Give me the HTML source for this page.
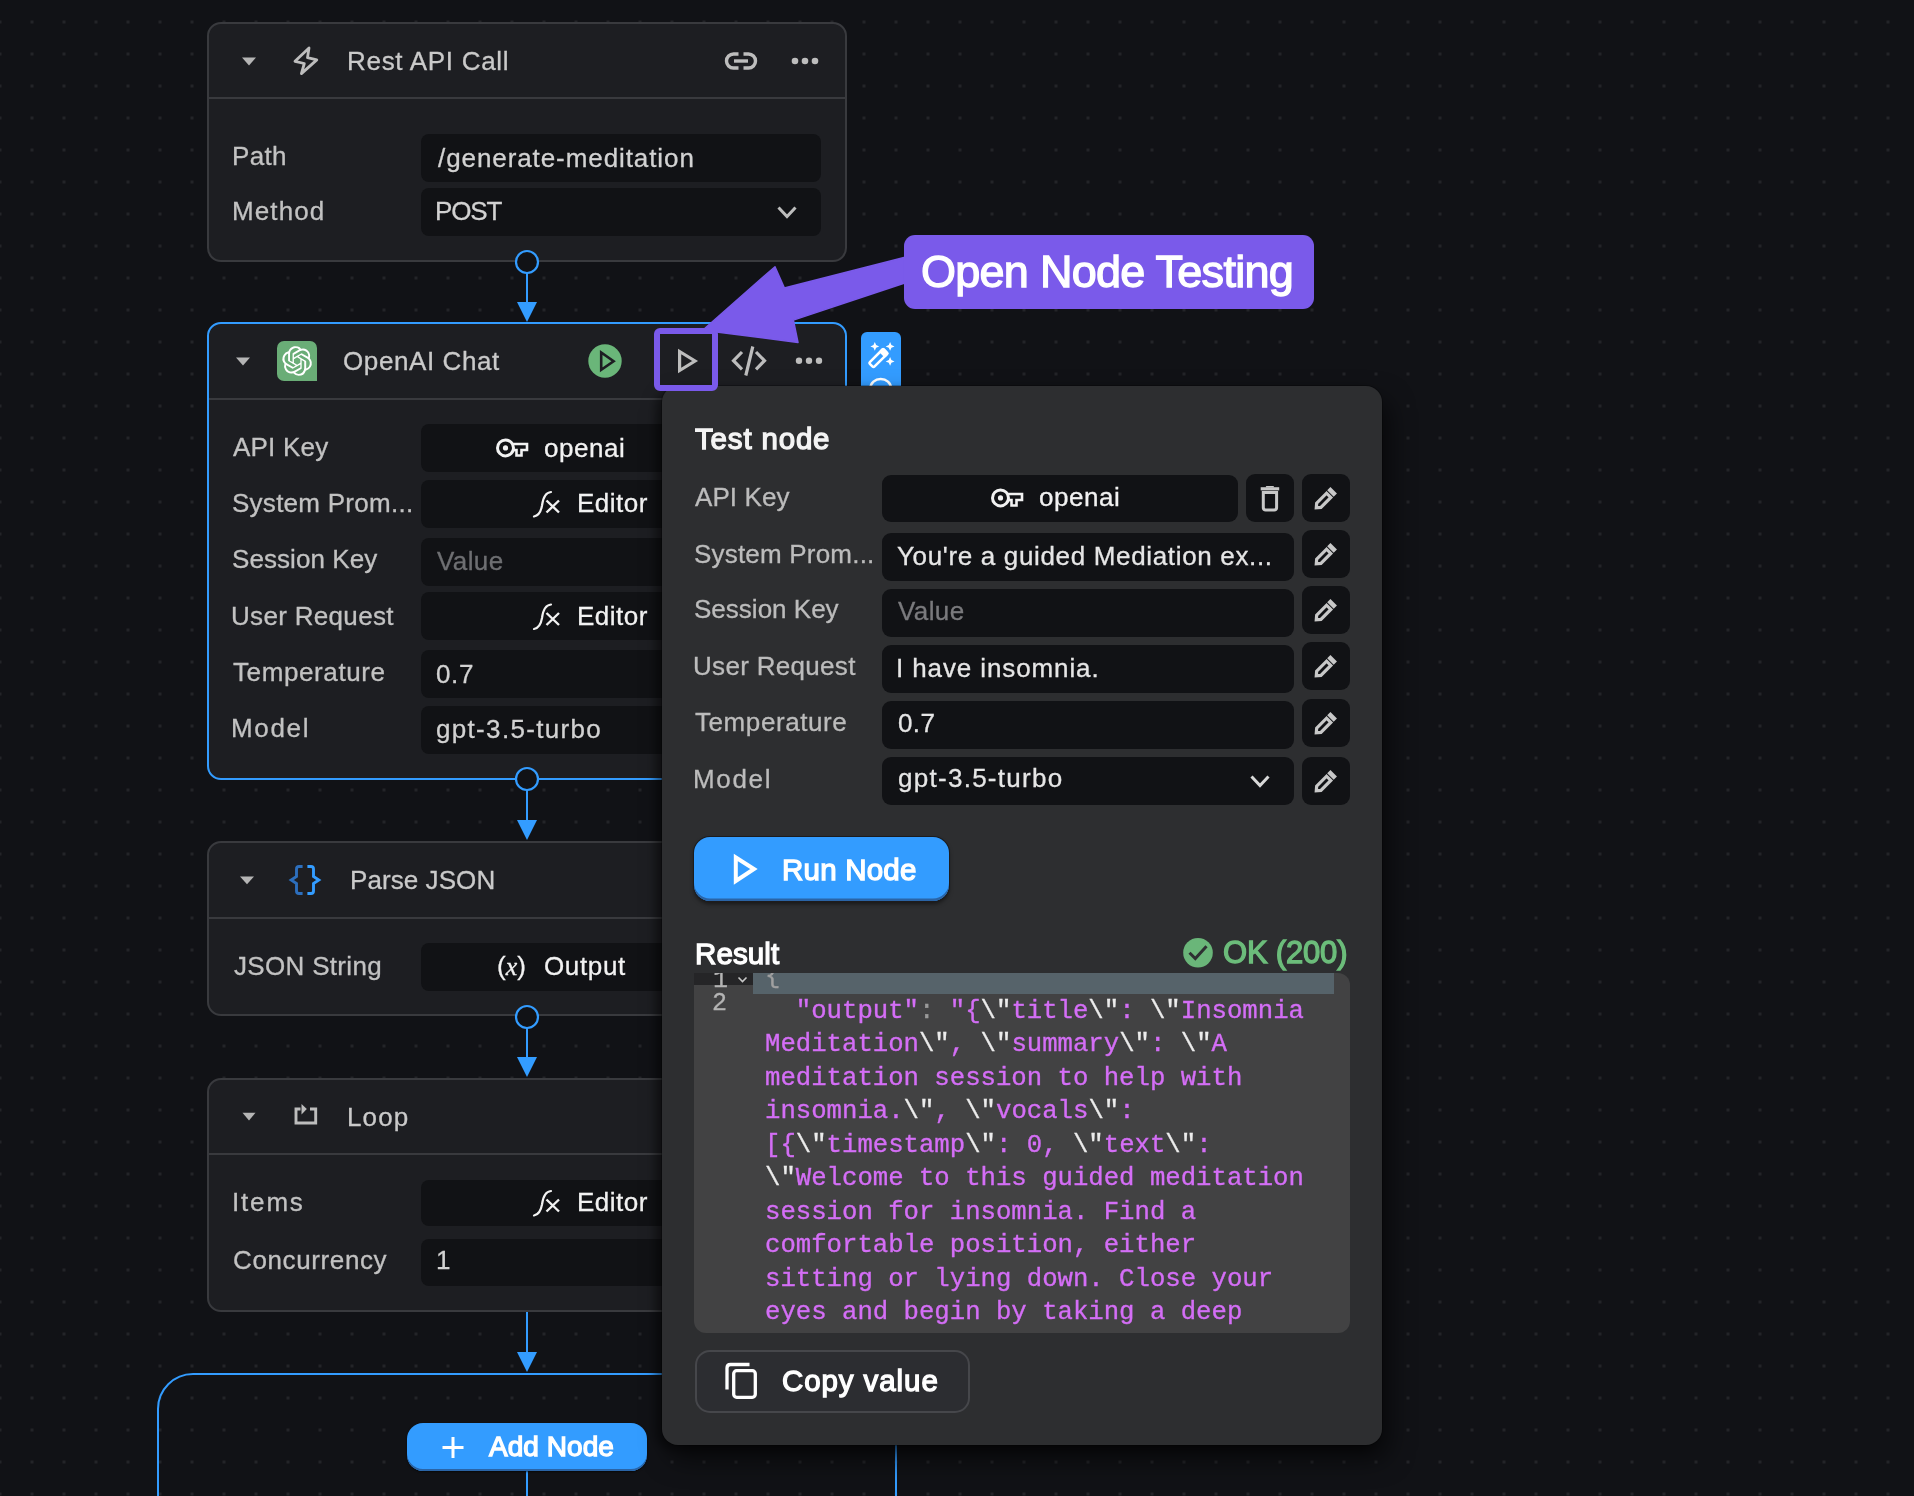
<!DOCTYPE html><html><head><meta charset="utf-8"><style>
html,body{margin:0;padding:0;}
body{width:1914px;height:1496px;overflow:hidden;position:relative;background-color:#111216;
font-family:"Liberation Sans",sans-serif;}
.t{position:absolute;white-space:pre;will-change:transform;-webkit-text-stroke:0.3px currentColor;}
.b{position:absolute;box-sizing:border-box;}
.s{position:absolute;left:0;top:0;overflow:visible;}
</style></head><body>
<svg class="s" width="1914" height="1496"><defs><pattern id="dp" x="-1.5" y="20.5" width="32" height="32" patternUnits="userSpaceOnUse"><rect x="0" y="0" width="3" height="3" fill="#232428"/></pattern></defs><rect width="1914" height="1496" fill="url(#dp)"/></svg>
<div class="b" style="left:207px;top:22px;width:640px;height:240px;background:#1d1e22;border:2px solid #393a3e;border-radius:14px;"></div>
<div class="b" style="left:209px;top:97px;width:636px;height:2px;background:#393a3e;"></div>
<div class="t" style="left:347.30px;top:44.5px;font-size:26px;line-height:32px;color:#cacaca;font-weight:400;letter-spacing:0.700px;font-family:'Liberation Sans',monospace;">Rest API Call</div>
<div class="b" style="left:421px;top:134px;width:400px;height:48px;background:#111215;border-radius:8px;"></div>
<div class="b" style="left:421px;top:188px;width:400px;height:48px;background:#111215;border-radius:8px;"></div>
<div class="t" style="left:232.30px;top:139.5px;font-size:26px;line-height:32px;color:#c2c2c2;font-weight:400;letter-spacing:0.333px;font-family:'Liberation Sans',monospace;">Path</div>
<div class="t" style="left:437.50px;top:142.0px;font-size:26px;line-height:32px;color:#d2d2d2;font-weight:400;letter-spacing:0.916px;font-family:'Liberation Sans',monospace;">/generate-meditation</div>
<div class="t" style="left:232.30px;top:195.0px;font-size:26px;line-height:32px;color:#c2c2c2;font-weight:400;letter-spacing:1.120px;font-family:'Liberation Sans',monospace;">Method</div>
<div class="t" style="left:435.20px;top:194.5px;font-size:26px;line-height:32px;color:#d2d2d2;font-weight:400;letter-spacing:-1.167px;font-family:'Liberation Sans',monospace;">POST</div>
<div class="b" style="left:207px;top:322px;width:640px;height:458px;background:#1d1e22;border:2px solid #339cff;border-radius:14px;"></div>
<div class="b" style="left:209px;top:397.5px;width:636px;height:2.0px;background:#393a3e;"></div>
<div class="b" style="left:277px;top:341px;width:40px;height:40px;background:#6aad77;border-radius:7px 7px 0 7px;"></div>
<div class="t" style="left:342.50px;top:345.0px;font-size:26px;line-height:32px;color:#cacaca;font-weight:400;letter-spacing:0.600px;font-family:'Liberation Sans',monospace;">OpenAI Chat</div>
<div class="b" style="left:421px;top:424px;width:339px;height:48px;background:#111215;border-radius:8px;"></div>
<div class="t" style="left:233.40px;top:431.4px;font-size:26px;line-height:32px;color:#c2c2c2;font-weight:400;letter-spacing:0.200px;font-family:'Liberation Sans',monospace;">API Key</div>
<div class="b" style="left:421px;top:480px;width:339px;height:48px;background:#111215;border-radius:8px;"></div>
<div class="t" style="left:232.40px;top:487.2px;font-size:26px;line-height:32px;color:#c2c2c2;font-weight:400;letter-spacing:0.262px;font-family:'Liberation Sans',monospace;">System Prom...</div>
<div class="b" style="left:421px;top:538px;width:339px;height:48px;background:#111215;border-radius:8px;"></div>
<div class="t" style="left:232.40px;top:543.1px;font-size:26px;line-height:32px;color:#c2c2c2;font-weight:400;letter-spacing:0.070px;font-family:'Liberation Sans',monospace;">Session Key</div>
<div class="b" style="left:421px;top:592px;width:339px;height:48px;background:#111215;border-radius:8px;"></div>
<div class="t" style="left:231.40px;top:599.5px;font-size:26px;line-height:32px;color:#c2c2c2;font-weight:400;letter-spacing:0.318px;font-family:'Liberation Sans',monospace;">User Request</div>
<div class="b" style="left:421px;top:650px;width:339px;height:48px;background:#111215;border-radius:8px;"></div>
<div class="t" style="left:233.40px;top:655.7px;font-size:26px;line-height:32px;color:#c2c2c2;font-weight:400;letter-spacing:0.610px;font-family:'Liberation Sans',monospace;">Temperature</div>
<div class="b" style="left:421px;top:706px;width:339px;height:48px;background:#111215;border-radius:8px;"></div>
<div class="t" style="left:231.40px;top:712.0px;font-size:26px;line-height:32px;color:#c2c2c2;font-weight:400;letter-spacing:1.650px;font-family:'Liberation Sans',monospace;">Model</div>
<div class="t" style="left:544.00px;top:432.0px;font-size:26px;line-height:32px;color:#f2f2f2;font-weight:400;letter-spacing:0.560px;font-family:'Liberation Sans',monospace;">openai</div>
<div class="t" style="left:576.80px;top:486.8px;font-size:26px;line-height:32px;color:#f2f2f2;font-weight:400;letter-spacing:0.480px;font-family:'Liberation Sans',monospace;">Editor</div>
<div class="t" style="left:437.40px;top:545.0px;font-size:26px;line-height:32px;color:#6e6f72;font-weight:400;letter-spacing:0.400px;font-family:'Liberation Sans',monospace;">Value</div>
<div class="t" style="left:576.80px;top:599.5px;font-size:26px;line-height:32px;color:#f2f2f2;font-weight:400;letter-spacing:0.480px;font-family:'Liberation Sans',monospace;">Editor</div>
<div class="t" style="left:436.40px;top:658.0px;font-size:26px;line-height:32px;color:#d2d2d2;font-weight:400;letter-spacing:0.650px;font-family:'Liberation Sans',monospace;">0.7</div>
<div class="t" style="left:436.40px;top:713.0px;font-size:26px;line-height:32px;color:#d2d2d2;font-weight:400;letter-spacing:1.325px;font-family:'Liberation Sans',monospace;">gpt-3.5-turbo</div>
<div class="b" style="left:207px;top:841px;width:640px;height:175px;background:#1d1e22;border:2px solid #393a3e;border-radius:14px;"></div>
<div class="b" style="left:209px;top:917px;width:636px;height:2px;background:#393a3e;"></div>
<div class="t" style="left:350.20px;top:864.0px;font-size:26px;line-height:32px;color:#cacaca;font-weight:400;letter-spacing:0.078px;font-family:'Liberation Sans',monospace;">Parse JSON</div>
<div class="b" style="left:421px;top:943px;width:339px;height:48px;background:#111215;border-radius:8px;"></div>
<div class="t" style="left:233.80px;top:950.0px;font-size:26px;line-height:32px;color:#c2c2c2;font-weight:400;letter-spacing:0.320px;font-family:'Liberation Sans',monospace;">JSON String</div>
<div class="t" style="left:497.00px;top:950.0px;font-size:26px;line-height:32px;color:#f2f2f2;font-weight:400;letter-spacing:0.000px;font-family:'Liberation Sans',monospace;">(<i style='font-family:"Liberation Serif"'>x</i>)</div>
<div class="t" style="left:543.80px;top:950.0px;font-size:26px;line-height:32px;color:#f2f2f2;font-weight:400;letter-spacing:0.640px;font-family:'Liberation Sans',monospace;">Output</div>
<div class="b" style="left:207px;top:1078px;width:640px;height:234px;background:#1d1e22;border:2px solid #393a3e;border-radius:14px;"></div>
<div class="b" style="left:209px;top:1153px;width:636px;height:2px;background:#393a3e;"></div>
<div class="t" style="left:347.30px;top:1100.5px;font-size:26px;line-height:32px;color:#cacaca;font-weight:400;letter-spacing:1.133px;font-family:'Liberation Sans',monospace;">Loop</div>
<div class="b" style="left:421px;top:1180px;width:339px;height:46px;background:#111215;border-radius:8px;"></div>
<div class="b" style="left:421px;top:1238.5px;width:339px;height:47.0px;background:#111215;border-radius:8px;"></div>
<div class="t" style="left:232.00px;top:1186.0px;font-size:26px;line-height:32px;color:#c2c2c2;font-weight:400;letter-spacing:1.825px;font-family:'Liberation Sans',monospace;">Items</div>
<div class="t" style="left:576.60px;top:1186.0px;font-size:26px;line-height:32px;color:#f2f2f2;font-weight:400;letter-spacing:0.480px;font-family:'Liberation Sans',monospace;">Editor</div>
<div class="t" style="left:233.00px;top:1244.4px;font-size:26px;line-height:32px;color:#c2c2c2;font-weight:400;letter-spacing:0.620px;font-family:'Liberation Sans',monospace;">Concurrency</div>
<div class="t" style="left:435.60px;top:1244.0px;font-size:26px;line-height:32px;color:#d2d2d2;font-weight:400;letter-spacing:0.000px;font-family:'Liberation Sans',monospace;">1</div>
<div class="b" style="left:157px;top:1373px;width:740px;height:227px;border:2px solid #339cff;border-radius:36px;"></div>
<svg class="s" width="1914" height="1496" viewBox="0 0 1914 1496" style=""><polygon points="242,57.6 256,57.6 249.0,65.4" fill="#b5b5b5"/><polygon points="309,48 295,61.3 304.3,63.5 301.4,73.6 316.8,59.9 307.5,57.6" stroke="#bdbdbd" stroke-width="2.8" fill="none" stroke-linejoin="round"/><path d="M738.5 54 H733.5 A7 7 0 0 0 733.5 68 H738.5 M743.5 54 H748.5 A7 7 0 0 1 748.5 68 H743.5" stroke="#bdbdbd" stroke-width="3.4" fill="none"/><rect x="734" y="59.3" width="14" height="3.4" fill="#bdbdbd"/><circle cx="795" cy="61" r="3.3" fill="#bdbdbd"/><circle cx="805" cy="61" r="3.3" fill="#bdbdbd"/><circle cx="815" cy="61" r="3.3" fill="#bdbdbd"/><path d="M778.5 207.5 L787.0 216.5 L795.5 207.5" stroke="#bdbdbd" stroke-width="3" fill="none"/><circle cx="527" cy="262" r="11" stroke="#339cff" stroke-width="2.2" fill="#111216"/><rect x="526" y="273" width="2" height="30" fill="#339cff"/><polygon points="517,302 537,302 527,322" fill="#339cff"/><polygon points="236,357.6 250,357.6 243.0,365.4" fill="#b5b5b5"/><circle cx="605" cy="361" r="16.7" fill="#6ab679"/><path d="M601.2 352.5 V369.8 L613.6 361.2 Z" stroke="#1d1e22" stroke-width="2.6" fill="none" stroke-linejoin="miter"/><path d="M679.6 351.5 V370.5 L695 361 Z" stroke="#bdbdbd" stroke-width="3.2" fill="none" stroke-linejoin="miter"/><path d="M742 352 L733.5 360.7 L742 369.4 M756 352 L764.5 360.7 L756 369.4 M752.8 346.5 L745.8 375.5" stroke="#bdbdbd" stroke-width="3.2" fill="none"/><circle cx="799" cy="360.8" r="3.2" fill="#bdbdbd"/><circle cx="809" cy="360.8" r="3.2" fill="#bdbdbd"/><circle cx="819" cy="360.8" r="3.2" fill="#bdbdbd"/><path transform="translate(282.3 346.2) scale(1.235)" d="M22.2819 9.8211a5.9847 5.9847 0 0 0-.5157-4.9108 6.0462 6.0462 0 0 0-6.5098-2.9A6.0651 6.0651 0 0 0 4.9807 4.1818a5.9847 5.9847 0 0 0-3.9977 2.9 6.0462 6.0462 0 0 0 .7427 7.0966 5.98 5.98 0 0 0 .511 4.9107 6.051 6.051 0 0 0 6.5146 2.9001A5.9847 5.9847 0 0 0 13.2599 24a6.0557 6.0557 0 0 0 5.7718-4.2058 5.9894 5.9894 0 0 0 3.9977-2.9001 6.0557 6.0557 0 0 0-.7475-7.0729zm-9.022 12.6081a4.4755 4.4755 0 0 1-2.8764-1.0408l.1419-.0804 4.7783-2.7582a.7948.7948 0 0 0 .3927-.6813v-6.7369l2.02 1.1686a.071.071 0 0 1 .038.052v5.5826a4.504 4.504 0 0 1-4.4945 4.4944zm-9.6607-4.1254a4.4708 4.4708 0 0 1-.5346-3.0137l.142.0852 4.783 2.7582a.7712.7712 0 0 0 .7806 0l5.8428-3.3685v2.3324a.0804.0804 0 0 1-.0332.0615L9.74 19.9502a4.4992 4.4992 0 0 1-6.1408-1.6464zM2.3408 7.8956a4.485 4.485 0 0 1 2.3655-1.9728V11.6a.7664.7664 0 0 0 .3879.6765l5.8144 3.3543-2.0201 1.1685a.0757.0757 0 0 1-.071 0l-4.8303-2.7865A4.504 4.504 0 0 1 2.3408 7.872zm16.5963 3.8558L13.1038 8.364 15.1192 7.2a.0757.0757 0 0 1 .071 0l4.8303 2.7913a4.4944 4.4944 0 0 1-.6765 8.1042v-5.6772a.79.79 0 0 0-.407-.667zm2.0107-3.0231l-.142-.0852-4.7735-2.7818a.7759.7759 0 0 0-.7854 0L9.409 9.2297V6.8974a.0662.0662 0 0 1 .0284-.0615l4.8303-2.7866a4.4992 4.4992 0 0 1 6.6802 4.66zM8.3065 12.863l-2.02-1.1638a.0804.0804 0 0 1-.038-.0567V6.0742a4.4992 4.4992 0 0 1 7.3757-3.4537l-.142.0805L8.704 5.459a.7948.7948 0 0 0-.3927.6813zm1.0976-2.3654l2.602-1.4998 2.6069 1.4998v2.9994l-2.5974 1.4997-2.6067-1.4997Z" fill="#ffffff"/><circle cx="505.5" cy="447.9" r="8" stroke="#f2f2f2" stroke-width="3" fill="none"/><circle cx="505.5" cy="447.9" r="2.6" fill="#f2f2f2"/><path d="M513 444.0 H527 V450.0 H521.5 V455.5 H516.5 V450.0 H513" stroke="#f2f2f2" stroke-width="2.6" fill="none" stroke-linejoin="miter"/><path d="M534 516.5 C539 515.5 541 511.5 542 505.5 C543 497.5 545 492.5 551 492.0" stroke="#f2f2f2" stroke-width="2.2" fill="none" stroke-linecap="round"/><path d="M546.5 500.5 L559 512.5 M559 500.5 L546.5 512.5" stroke="#f2f2f2" stroke-width="2.4" fill="none"/><path d="M534 629 C539 628 541 624 542 618 C543 610 545 605 551 604.5" stroke="#f2f2f2" stroke-width="2.2" fill="none" stroke-linecap="round"/><path d="M546.5 613 L559 625 M559 613 L546.5 625" stroke="#f2f2f2" stroke-width="2.4" fill="none"/><circle cx="527" cy="779" r="11" stroke="#339cff" stroke-width="2.2" fill="#111216"/><rect x="526" y="790" width="2" height="31" fill="#339cff"/><polygon points="517,820 537,820 527,840" fill="#339cff"/><polygon points="240,876.6 254,876.6 247.0,884.3" fill="#b5b5b5"/><path d="M302.6 866.5 H299 Q296.5 866.5 296.5 869 V876.5 L291.2 880 L296.5 883.5 V891 Q296.5 893.5 299 893.5 H302.6" stroke="#2d6fbd" stroke-width="2.9" fill="none" stroke-linejoin="miter"/><path d="M307.4 866.5 H311 Q313.5 866.5 313.5 869 V876.5 L318.8 880 L313.5 883.5 V891 Q313.5 893.5 311 893.5 H307.4" stroke="#339cff" stroke-width="2.9" fill="none" stroke-linejoin="miter"/><circle cx="527" cy="1017" r="11" stroke="#339cff" stroke-width="2.2" fill="#111216"/><rect x="526" y="1028" width="2" height="30" fill="#339cff"/><polygon points="517,1057 537,1057 527,1077" fill="#339cff"/><polygon points="242.5,1112.8 255.5,1112.8 249.0,1120.6" fill="#b5b5b5"/><path d="M300.5 1109 H296 V1123 H315.7 V1109 H310" stroke="#bdbdbd" stroke-width="2.9" fill="none"/><polygon points="301.5,1104 306.8,1109 301.5,1114.5" fill="#bdbdbd"/><path d="M534 1215.5 C539 1214.5 541 1210.5 542 1204.5 C543 1196.5 545 1191.5 551 1191.0" stroke="#f2f2f2" stroke-width="2.2" fill="none" stroke-linecap="round"/><path d="M546.5 1199.5 L559 1211.5 M559 1199.5 L546.5 1211.5" stroke="#f2f2f2" stroke-width="2.4" fill="none"/><rect x="526" y="1312" width="2" height="41" fill="#339cff"/><polygon points="517,1352 537,1352 527,1372" fill="#339cff"/><rect x="526" y="1470" width="2" height="30" fill="#339cff"/></svg>
<div class="b" style="left:407px;top:1423px;width:240px;height:48px;background:#339cff;border-radius:16px;box-shadow:inset 0 -2px 0 #2a64a6, 0 1px 2px rgba(0,0,0,.6);"></div>
<svg class="s" width="1914" height="1496" viewBox="0 0 1914 1496" style=""><path d="M453 1437 V1458 M442.5 1447.5 H463.5" stroke="#fff" stroke-width="3"/></svg>
<div class="t" style="left:489.00px;top:1429.3px;font-size:28px;line-height:35px;color:#ffffff;font-weight:400;letter-spacing:0.057px;font-family:'Liberation Sans',monospace;-webkit-text-stroke:1.3px currentColor;">Add Node</div>
<div class="b" style="left:861px;top:332px;width:40px;height:68px;background:#339cff;border-radius:6px;"></div>
<svg class="s" width="1914" height="1496" viewBox="0 0 1914 1496" style=""><g fill="#fff"><path d="M874.8 342 L876.1 345.1 L879.2 346.4 L876.1 347.7 L874.8 350.8 L873.5 347.7 L870.4 346.4 L873.5 345.1Z"/><path d="M890.1 342 L891.4 345.1 L894.5 346.4 L891.4 347.7 L890.1 350.8 L888.8 347.7 L885.7 346.4 L888.8 345.1Z"/><path d="M890.1 357 L891.4 360.1 L894.5 361.4 L891.4 362.7 L890.1 365.8 L888.8 362.7 L885.7 361.4 L888.8 360.1Z"/></g><g transform="translate(878.3 358.2) rotate(-45)"><rect x="-10" y="-3.2" width="20" height="6.4" rx="1.6" stroke="#fff" stroke-width="2.5" fill="none"/><rect x="5" y="-4.4" width="6.2" height="8.8" rx="1.6" fill="#fff"/></g><path d="M870.5 388 A10.2 9 0 0 1 890.9 388" stroke="#fff" stroke-width="2.6" fill="none"/></svg>
<div class="b" style="left:662px;top:386px;width:720px;height:1058.5px;background:#2d2e30;border-radius:16px;box-shadow:0 0 0 1px rgba(0,0,0,.25), 6px 14px 26px rgba(0,0,0,.6), -6px 4px 10px rgba(0,0,0,.4);"></div>
<div class="t" style="left:695.10px;top:419.9px;font-size:29.5px;line-height:37px;color:#f4f4f4;font-weight:400;letter-spacing:0.825px;font-family:'Liberation Sans',monospace;-webkit-text-stroke:1.3px currentColor;">Test node</div>
<div class="b" style="left:882px;top:474.5px;width:356px;height:47.5px;background:#111215;border-radius:9px;"></div>
<div class="b" style="left:1246px;top:474px;width:48px;height:48px;background:#111215;border-radius:9px;"></div>
<div class="b" style="left:1302px;top:474px;width:48px;height:48px;background:#111215;border-radius:9px;"></div>
<div class="t" style="left:695.20px;top:480.9px;font-size:26px;line-height:32px;color:#bcbcbc;font-weight:400;letter-spacing:0.083px;font-family:'Liberation Sans',monospace;">API Key</div>
<div class="b" style="left:882px;top:533px;width:412px;height:47.60000000000002px;background:#111215;border-radius:9px;"></div>
<div class="b" style="left:1302px;top:530px;width:48px;height:48px;background:#111215;border-radius:9px;"></div>
<div class="t" style="left:694.20px;top:538.0px;font-size:26px;line-height:32px;color:#bcbcbc;font-weight:400;letter-spacing:0.200px;font-family:'Liberation Sans',monospace;">System Prom...</div>
<div class="b" style="left:882px;top:589.2px;width:412px;height:47.5px;background:#111215;border-radius:9px;"></div>
<div class="b" style="left:1302px;top:586px;width:48px;height:48px;background:#111215;border-radius:9px;"></div>
<div class="t" style="left:694.20px;top:593.4px;font-size:26px;line-height:32px;color:#bcbcbc;font-weight:400;letter-spacing:0.010px;font-family:'Liberation Sans',monospace;">Session Key</div>
<div class="b" style="left:882px;top:645px;width:412px;height:47.5px;background:#111215;border-radius:9px;"></div>
<div class="b" style="left:1302px;top:642px;width:48px;height:48px;background:#111215;border-radius:9px;"></div>
<div class="t" style="left:693.20px;top:650.0px;font-size:26px;line-height:32px;color:#bcbcbc;font-weight:400;letter-spacing:0.309px;font-family:'Liberation Sans',monospace;">User Request</div>
<div class="b" style="left:882px;top:701px;width:412px;height:47.60000000000002px;background:#111215;border-radius:9px;"></div>
<div class="b" style="left:1302px;top:699px;width:48px;height:48px;background:#111215;border-radius:9px;"></div>
<div class="t" style="left:695.20px;top:706.0px;font-size:26px;line-height:32px;color:#bcbcbc;font-weight:400;letter-spacing:0.580px;font-family:'Liberation Sans',monospace;">Temperature</div>
<div class="b" style="left:882px;top:757px;width:412px;height:48px;background:#111215;border-radius:9px;"></div>
<div class="b" style="left:1302px;top:757px;width:48px;height:48px;background:#111215;border-radius:9px;"></div>
<div class="t" style="left:693.20px;top:763.3px;font-size:26px;line-height:32px;color:#bcbcbc;font-weight:400;letter-spacing:1.650px;font-family:'Liberation Sans',monospace;">Model</div>
<div class="t" style="left:1039.00px;top:481.0px;font-size:26px;line-height:32px;color:#f2f2f2;font-weight:400;letter-spacing:0.540px;font-family:'Liberation Sans',monospace;">openai</div>
<div class="t" style="left:897.40px;top:540.0px;font-size:26px;line-height:32px;color:#e6e6e6;font-weight:400;letter-spacing:0.660px;font-family:'Liberation Sans',monospace;">You're a guided Mediation ex...</div>
<div class="t" style="left:898.40px;top:595.3px;font-size:26px;line-height:32px;color:#7a7a7d;font-weight:400;letter-spacing:0.400px;font-family:'Liberation Sans',monospace;">Value</div>
<div class="t" style="left:895.60px;top:652.0px;font-size:26px;line-height:32px;color:#e6e6e6;font-weight:400;letter-spacing:0.887px;font-family:'Liberation Sans',monospace;">I have insomnia.</div>
<div class="t" style="left:897.90px;top:707.2px;font-size:26px;line-height:32px;color:#e6e6e6;font-weight:400;letter-spacing:0.350px;font-family:'Liberation Sans',monospace;">0.7</div>
<div class="t" style="left:897.90px;top:762.1px;font-size:26px;line-height:32px;color:#e6e6e6;font-weight:400;letter-spacing:1.275px;font-family:'Liberation Sans',monospace;">gpt-3.5-turbo</div>
<div class="b" style="left:694px;top:837px;width:255px;height:64px;background:#339cff;border-radius:16px;box-shadow:inset 0 -2.5px 0 #2a64a6, 0 0 0 1px #1c1c1e, 0 3px 4px rgba(0,0,0,.5);"></div>
<div class="t" style="left:781.80px;top:851.1px;font-size:29.5px;line-height:37px;color:#ffffff;font-weight:400;letter-spacing:0.214px;font-family:'Liberation Sans',monospace;-webkit-text-stroke:1.3px currentColor;">Run Node</div>
<div class="t" style="left:694.50px;top:934.8px;font-size:29.5px;line-height:37px;color:#ffffff;font-weight:400;letter-spacing:0.100px;font-family:'Liberation Sans',monospace;-webkit-text-stroke:1.3px currentColor;">Result</div>
<div class="t" style="left:1222.80px;top:932.8px;font-size:31px;line-height:39px;color:#6cbd7b;font-weight:400;letter-spacing:-0.186px;font-family:'Liberation Sans',monospace;-webkit-text-stroke:1.3px currentColor;">OK (200)</div>
<div class="b" style="left:694px;top:973px;width:656px;height:360px;background:#424243;border-radius:0 12px 12px 12px;overflow:hidden;"></div>
<div class="b" style="left:753px;top:973px;width:581px;height:21px;background:#56636a;"></div>
<div class="b" style="left:694px;top:973px;width:59px;height:12px;background:#252527;"></div>
<style>.p{color:#d46ef6}.w{color:#ececec}.g{color:#9a9a9a}.code{-webkit-text-stroke:0.35px currentColor}</style>
<div class="t" style="left:765.00px;top:995.8px;font-size:25.67px;line-height:32px;color:#d46ef6;font-weight:400;letter-spacing:0.000px;font-family:'Liberation Mono',monospace;-webkit-text-stroke:0.35px;">  <span class="p">"output"</span><span class="g">:</span> <span class="p">"{</span><span class="w">\"</span><span class="p">title</span><span class="w">\"</span><span class="p">:</span> <span class="w">\"</span><span class="p">Insomnia</span></div>
<div class="t" style="left:765.00px;top:1029.3px;font-size:25.67px;line-height:32px;color:#d46ef6;font-weight:400;letter-spacing:0.000px;font-family:'Liberation Mono',monospace;-webkit-text-stroke:0.35px;"><span class="p">Meditation</span><span class="w">\"</span><span class="p">,</span> <span class="w">\"</span><span class="p">summary</span><span class="w">\"</span><span class="p">:</span> <span class="w">\"</span><span class="p">A</span></div>
<div class="t" style="left:765.00px;top:1062.8px;font-size:25.67px;line-height:32px;color:#d46ef6;font-weight:400;letter-spacing:0.000px;font-family:'Liberation Mono',monospace;-webkit-text-stroke:0.35px;"><span class="p">meditation session to help with</span></div>
<div class="t" style="left:765.00px;top:1096.3px;font-size:25.67px;line-height:32px;color:#d46ef6;font-weight:400;letter-spacing:0.000px;font-family:'Liberation Mono',monospace;-webkit-text-stroke:0.35px;"><span class="p">insomnia.</span><span class="w">\"</span><span class="p">,</span> <span class="w">\"</span><span class="p">vocals</span><span class="w">\"</span><span class="p">:</span></div>
<div class="t" style="left:765.00px;top:1129.8px;font-size:25.67px;line-height:32px;color:#d46ef6;font-weight:400;letter-spacing:0.000px;font-family:'Liberation Mono',monospace;-webkit-text-stroke:0.35px;"><span class="p">[{</span><span class="w">\"</span><span class="p">timestamp</span><span class="w">\"</span><span class="p">: 0,</span> <span class="w">\"</span><span class="p">text</span><span class="w">\"</span><span class="p">:</span></div>
<div class="t" style="left:765.00px;top:1163.3px;font-size:25.67px;line-height:32px;color:#d46ef6;font-weight:400;letter-spacing:0.000px;font-family:'Liberation Mono',monospace;-webkit-text-stroke:0.35px;"><span class="w">\"</span><span class="p">Welcome to this guided meditation</span></div>
<div class="t" style="left:765.00px;top:1196.8px;font-size:25.67px;line-height:32px;color:#d46ef6;font-weight:400;letter-spacing:0.000px;font-family:'Liberation Mono',monospace;-webkit-text-stroke:0.35px;"><span class="p">session for insomnia. Find a</span></div>
<div class="t" style="left:765.00px;top:1230.3px;font-size:25.67px;line-height:32px;color:#d46ef6;font-weight:400;letter-spacing:0.000px;font-family:'Liberation Mono',monospace;-webkit-text-stroke:0.35px;"><span class="p">comfortable position, either</span></div>
<div class="t" style="left:765.00px;top:1263.8px;font-size:25.67px;line-height:32px;color:#d46ef6;font-weight:400;letter-spacing:0.000px;font-family:'Liberation Mono',monospace;-webkit-text-stroke:0.35px;"><span class="p">sitting or lying down. Close your</span></div>
<div class="t" style="left:765.00px;top:1297.3px;font-size:25.67px;line-height:32px;color:#d46ef6;font-weight:400;letter-spacing:0.000px;font-family:'Liberation Mono',monospace;-webkit-text-stroke:0.35px;"><span class="p">eyes and begin by taking a deep</span></div>
<div class="t" style="left:711.50px;top:987.8px;font-size:25px;line-height:31px;color:#b4b4b4;font-weight:400;letter-spacing:0.000px;font-family:'Liberation Mono',monospace;">2</div>
<div class="b" style="left:694px;top:973px;width:640px;height:21px;overflow:hidden;"><div class="t" style="left:19px;top:-8.5px;font-family:'Liberation Mono';font-size:25px;line-height:31px;color:#b4b4b4;">1</div><div class="t" style="left:71px;top:-12px;font-family:'Liberation Mono';font-size:25.67px;line-height:31px;color:#a0a0a0;">{</div></div>
<svg class="s" width="1914" height="1496" viewBox="0 0 1914 1496" style=""><path d="M738.5 977.5 L742.5 981.5 L746.5 977.5" stroke="#c8c8c8" stroke-width="1.6" fill="none"/></svg>
<div class="b" style="left:694.5px;top:1350px;width:275.5px;height:63px;background:#2c2d31;border:2px solid #46474b;border-radius:15px;"></div>
<svg class="s" width="1914" height="1496" viewBox="0 0 1914 1496" style=""><path d="M727 1389.5 V1368 Q727 1364.5 730.5 1364.5 H749.5" stroke="#fff" stroke-width="3.3" fill="none"/><rect x="733.7" y="1370.7" width="21.6" height="26.6" rx="3" stroke="#fff" stroke-width="3.3" fill="none"/></svg>
<div class="t" style="left:781.90px;top:1361.5px;font-size:29.5px;line-height:37px;color:#ffffff;font-weight:400;letter-spacing:0.911px;font-family:'Liberation Sans',monospace;-webkit-text-stroke:1.3px currentColor;">Copy value</div>
<svg class="s" width="1914" height="1496" viewBox="0 0 1914 1496" style=""><circle cx="1000.5" cy="497.9" r="8" stroke="#f2f2f2" stroke-width="3" fill="none"/><circle cx="1000.5" cy="497.9" r="2.6" fill="#f2f2f2"/><path d="M1008 494.0 H1022 V500.0 H1016.5 V505.5 H1011.5 V500.0 H1008" stroke="#f2f2f2" stroke-width="2.6" fill="none" stroke-linejoin="miter"/><g transform="translate(1260.7,486)"><rect x="0" y="1.2" width="18.5" height="3.2" fill="#c8c8c8"/><rect x="5.2" y="0" width="8" height="1.6" rx="0.6" fill="#c8c8c8"/><path d="M2.6 6.6 H15.9 V21.5 Q15.9 23.9 13.5 23.9 H5 Q2.6 23.9 2.6 21.5 Z" stroke="#c8c8c8" stroke-width="3" fill="none"/></g><g transform="translate(1325.5,498.5) rotate(-45)"><path d="M-13 0 L-9.5 -3 H4.5 V3 H-9.5 Z" stroke="#c8c8c8" stroke-width="3.2" fill="none" stroke-linejoin="miter"/><rect x="7" y="-4.6" width="4.6" height="9.2" fill="#c8c8c8"/></g><g transform="translate(1325.5,554.5) rotate(-45)"><path d="M-13 0 L-9.5 -3 H4.5 V3 H-9.5 Z" stroke="#c8c8c8" stroke-width="3.2" fill="none" stroke-linejoin="miter"/><rect x="7" y="-4.6" width="4.6" height="9.2" fill="#c8c8c8"/></g><g transform="translate(1325.5,610.5) rotate(-45)"><path d="M-13 0 L-9.5 -3 H4.5 V3 H-9.5 Z" stroke="#c8c8c8" stroke-width="3.2" fill="none" stroke-linejoin="miter"/><rect x="7" y="-4.6" width="4.6" height="9.2" fill="#c8c8c8"/></g><g transform="translate(1325.5,666.5) rotate(-45)"><path d="M-13 0 L-9.5 -3 H4.5 V3 H-9.5 Z" stroke="#c8c8c8" stroke-width="3.2" fill="none" stroke-linejoin="miter"/><rect x="7" y="-4.6" width="4.6" height="9.2" fill="#c8c8c8"/></g><g transform="translate(1325.5,723.5) rotate(-45)"><path d="M-13 0 L-9.5 -3 H4.5 V3 H-9.5 Z" stroke="#c8c8c8" stroke-width="3.2" fill="none" stroke-linejoin="miter"/><rect x="7" y="-4.6" width="4.6" height="9.2" fill="#c8c8c8"/></g><g transform="translate(1325.5,781.5) rotate(-45)"><path d="M-13 0 L-9.5 -3 H4.5 V3 H-9.5 Z" stroke="#c8c8c8" stroke-width="3.2" fill="none" stroke-linejoin="miter"/><rect x="7" y="-4.6" width="4.6" height="9.2" fill="#c8c8c8"/></g><path d="M1251.5 776.5 L1260.0 785.5 L1268.5 776.5" stroke="#d8d8d8" stroke-width="3" fill="none"/><path d="M735.8 857.5 V881 L754 869 Z" stroke="#fff" stroke-width="4" fill="none" stroke-linejoin="miter"/><circle cx="1198" cy="952.7" r="14.8" fill="#6ab679"/><path d="M1189.5 952.8 L1195.3 958.5 L1206.5 946.3" stroke="#2e2f32" stroke-width="3" fill="none"/></svg>
<svg class="s" width="1914" height="1496" viewBox="0 0 1914 1496" style=""><rect x="657" y="331" width="58" height="57" rx="3" stroke="#7a5aea" stroke-width="6" fill="none"/><polygon points="702.7,330.2 775,266.7 784.3,287.9 904,257.5 904,283.3 793.4,320.1 798,342.5" fill="#7a5aea" stroke="#7a5aea" stroke-width="1.5" stroke-linejoin="round"/></svg>
<div class="b" style="left:904px;top:235px;width:410px;height:74px;background:#7a5aea;border-radius:11px;"></div>
<div class="t" style="left:920.70px;top:243.9px;font-size:45px;line-height:56px;color:#ffffff;font-weight:400;letter-spacing:-0.731px;font-family:'Liberation Sans',monospace;-webkit-text-stroke:1.3px currentColor;">Open Node Testing</div>
</body></html>
